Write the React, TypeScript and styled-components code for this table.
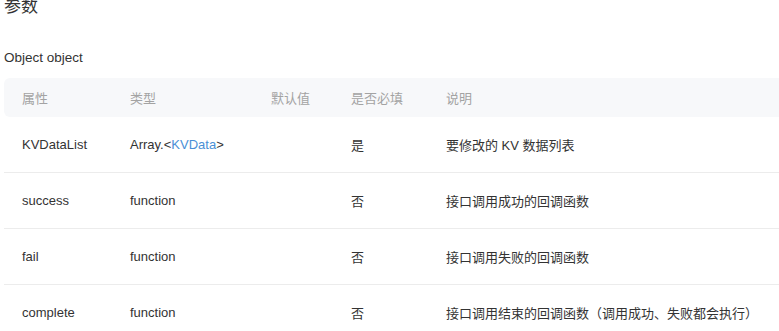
import React from "react";
import styled, { createGlobalStyle } from "styled-components";

type Param = {
  name: string;
  type: string;
  typeRef?: string;
  defaultValue: string;
  required: string;
  desc: string;
};

const params: Param[] = [
  {
    name: "KVDataList",
    type: "Array",
    typeRef: "KVData",
    defaultValue: "",
    required: "是",
    desc: "要修改的 KV 数据列表",
  },
  { name: "success", type: "function", defaultValue: "", required: "否", desc: "接口调用成功的回调函数" },
  { name: "fail", type: "function", defaultValue: "", required: "否", desc: "接口调用失败的回调函数" },
  {
    name: "complete",
    type: "function",
    defaultValue: "",
    required: "否",
    desc: "接口调用结束的回调函数（调用成功、失败都会执行）",
  },
];

export default function App() {
  return (
    <>
      <GlobalStyle />
      <Page>
        <Title>参数</Title>
        <Subtitle>Object object</Subtitle>
        <Table>
          <thead>
            <tr>
              <Th $w={108}>属性</Th>
              <Th $w={141}>类型</Th>
              <Th $w={80}>默认值</Th>
              <Th $w={95}>是否必填</Th>
              <Th>说明</Th>
            </tr>
          </thead>
          <tbody>
            {params.map((p) => (
              <Row key={p.name}>
                <Td>{p.name}</Td>
                <Td>
                  {p.typeRef ? (
                    <>
                      {p.type}.&lt;<TypeLink>{p.typeRef}</TypeLink>&gt;
                    </>
                  ) : (
                    p.type
                  )}
                </Td>
                <Td>{p.defaultValue}</Td>
                <Td>{p.required}</Td>
                <Td>{p.desc}</Td>
              </Row>
            ))}
          </tbody>
        </Table>
      </Page>
    </>
  );
}

const GlobalStyle = createGlobalStyle`
  body {
    margin: 0;
    background: #fff;
    font-family: "Liberation Sans", Arial, "Noto Sans CJK SC", sans-serif;
    overflow: hidden;
  }
`;

const Page = styled.div`
  padding: 0 0 0 4px;
  color: #333;
`;

const Title = styled.h2`
  margin: -4px 0 0;
  font-size: 17px;
  font-weight: 400;
  line-height: 22px;
  color: #333;
`;

const Subtitle = styled.p`
  margin: 32px 0 0;
  font-size: 13.5px;
  line-height: 16px;
  color: #333;
`;

const Table = styled.table`
  margin-top: 12px;
  width: 775px;
  border-collapse: separate;
  border-spacing: 0;
  font-size: 13px;
`;

const Th = styled.th<{ $w?: number }>`
  width: ${(p) => (p.$w ? `${p.$w}px` : "auto")};
  height: 39px;
  padding: 0;
  text-align: left;
  font-weight: 400;
  color: #a3a3a3;
  background: #f7f8fa;
  &:first-child {
    padding-left: 18px;
    border-radius: 6px 0 0 6px;
  }
`;

const Row = styled.tr`
  & + & td {
    border-top: 1px solid #ececec;
  }
`;

const Td = styled.td`
  height: 55px;
  padding: 0;
  color: #333;
  vertical-align: middle;
  &:first-child {
    padding-left: 18px;
  }
`;

const TypeLink = styled.span`
  color: #4a8fd6;
`;
